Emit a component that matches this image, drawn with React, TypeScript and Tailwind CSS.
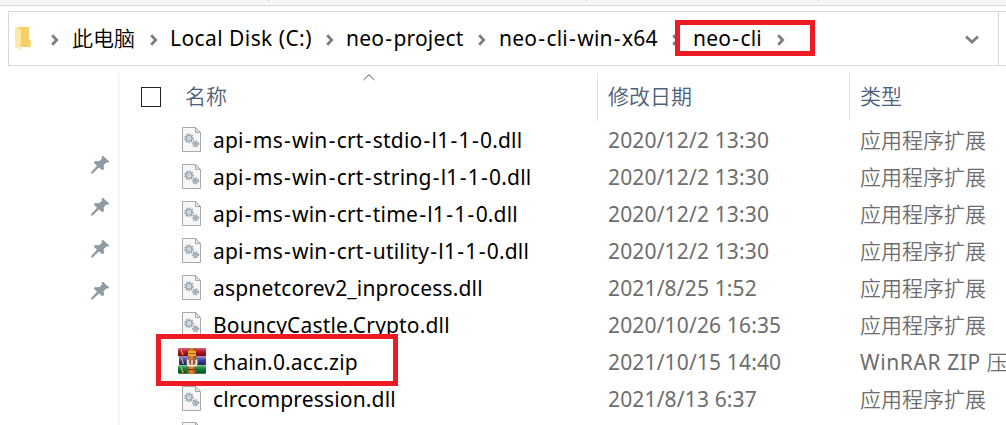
import React from "react";

type FileRow = {
  name: string;
  date: string;
  kind: string;
  icon: "dll" | "zip";
};

const files: FileRow[] = [
  { name: "api-ms-win-crt-stdio-l1-1-0.dll", date: "2020/12/2 13:30", kind: "应用程序扩展", icon: "dll" },
  { name: "api-ms-win-crt-string-l1-1-0.dll", date: "2020/12/2 13:30", kind: "应用程序扩展", icon: "dll" },
  { name: "api-ms-win-crt-time-l1-1-0.dll", date: "2020/12/2 13:30", kind: "应用程序扩展", icon: "dll" },
  { name: "api-ms-win-crt-utility-l1-1-0.dll", date: "2020/12/2 13:30", kind: "应用程序扩展", icon: "dll" },
  { name: "aspnetcorev2_inprocess.dll", date: "2021/8/25 1:52", kind: "应用程序扩展", icon: "dll" },
  { name: "BouncyCastle.Crypto.dll", date: "2020/10/26 16:35", kind: "应用程序扩展", icon: "dll" },
  { name: "chain.0.acc.zip", date: "2021/10/15 14:40", kind: "WinRAR ZIP 压", icon: "zip" },
  { name: "clrcompression.dll", date: "2021/8/13 6:37", kind: "应用程序扩展", icon: "dll" },
];

// Gives hyphens a little more room than the font does.
function Hyphenated({ text }: { text: string }) {
  return (
    <>
      {text.split("-").map((part, i) => (
        <React.Fragment key={i}>
          {i > 0 && <span className="px-[1.15px]">-</span>}
          {part}
        </React.Fragment>
      ))}
    </>
  );
}

function Chevron() {
  return (
    <svg width="8" height="12" viewBox="0 0 8 12" className="mt-0.5 shrink-0" fill="none" stroke="#7f7f7f" strokeWidth="2.8">
      <path d="M1.2 1.3 5.7 6 1.2 10.7" />
    </svg>
  );
}

function FolderIcon() {
  return (
    <svg width="16" height="24" viewBox="0 0 16 24" className="shrink-0">
      <path d="M3 0h11v12.5l2 1.5v6H3z" fill="#f5cf68" />
      <path d="M0 0h2l3.8 3v20.5L0 19.5z" fill="#ffe9a6" />
      <path d="M14 14l2 1v5h-2z" fill="#f8d778" />
    </svg>
  );
}

function Gear({ cx, cy, r }: { cx: number; cy: number; r: number }) {
  return (
    <g fill="none" stroke="#98a5af">
      <circle cx={cx} cy={cy} r={r} strokeWidth="1.5" strokeDasharray="1.5 1.2" />
      <circle cx={cx} cy={cy} r={r - 1.2} strokeWidth="1.3" fill="#dce3e8" />
      <circle cx={cx} cy={cy} r="0.7" fill="#98a5af" stroke="none" />
    </g>
  );
}

function DllIcon() {
  return (
    <svg width="19" height="25" viewBox="0 0 19 25" className="shrink-0">
      <path d="M.5.5h13l5 5v19H.5z" fill="#f7f7f7" stroke="#a8a8a8" />
      <path d="M13.5.5v5h5z" fill="#e4e4e4" stroke="#a0a0a0" strokeWidth=".9" />
      <Gear cx={7} cy={11.3} r={4.1} />
      <Gear cx={13.5} cy={16.8} r={2.9} />
    </svg>
  );
}

function ZipIcon() {
  return (
    <svg width="28" height="26" viewBox="0 0 28 26" className="shrink-0">
      <defs>
        <linearGradient id="red" x2="0" y2="1"><stop stopColor="#df6670" /><stop offset=".45" stopColor="#b3152c" /><stop offset="1" stopColor="#6f0714" /></linearGradient>
        <linearGradient id="blue" x2="0" y2="1"><stop stopColor="#8a8fd8" /><stop offset=".45" stopColor="#3d3f9c" /><stop offset="1" stopColor="#20215c" /></linearGradient>
        <linearGradient id="green" x2="0" y2="1"><stop stopColor="#5dbb78" /><stop offset=".45" stopColor="#157a38" /><stop offset="1" stopColor="#084a1c" /></linearGradient>
        <linearGradient id="belt"><stop stopColor="#a8551c" /><stop offset=".5" stopColor="#e08a38" /><stop offset="1" stopColor="#96420f" /></linearGradient>
      </defs>
      <rect x="0" y="0" width="28" height="8.5" rx="1" fill="url(#red)" />
      <rect x="1" y="8.7" width="27" height="8.4" rx="1" fill="url(#blue)" />
      <rect x="0" y="17.3" width="28" height="8.5" rx="1" fill="url(#green)" />
      <path d="M3 1.5 5 7M3.5 10 5.5 16M3 18.5 5 25" stroke="#d9a94b" strokeWidth="1.2" />
      <path d="M10 1.5 12 0h4l2 1.5V26H9.5V18h1z" fill="url(#belt)" />
      <path d="M10 3h8v5h-8z" fill="#efa92f" />
      <path d="M10.5 5.5h7" stroke="#9c5114" strokeWidth="1" />
      <path d="M9.8 11.5v4.3q0 2 2 2h4.6q2 0 2-2V11.5" fill="none" stroke="#f1eee9" strokeWidth="2" />
      <path d="M12.5 11h3v5h-3z" fill="#7f3912" />
      <path d="M14 11.5v4.5" stroke="#fff" strokeWidth="1.4" />
      <path d="M10 21.5h8" stroke="#7a3510" strokeWidth="1" />
    </svg>
  );
}

function PinIcon() {
  return (
    <svg width="19" height="19" viewBox="0 0 19 19" fill="#8f9ba3">
      <path d="M11.8.8 18.2 6.6 17.5 7.6 15.3 7.4 12.7 10.2 13 14 11.6 15.2 7.9 12.4 1.6 18.4.2 18.4.2 16.9 6 10.7 2.9 7.7 4 6 8.2 6.2 11 3.4 10.6 1.5z" />
    </svg>
  );
}

function AddressBar() {
  return (
    <div className="flex h-[55px] pl-2 text-[21px] leading-[53px] tracking-[0.2px] whitespace-nowrap text-black">
      <div className="flex w-[991px] shrink-0 items-center border border-[#d9d9d9] pl-1.5">
        <FolderIcon />
        <span className="ml-5 w-[21px]"><Chevron /></span>
        <span className="w-[78px] font-[350] tracking-normal">此电脑</span>
        <span className="w-[20px]"><Chevron /></span>
        <span className="w-[156px] tracking-[0.43px]">Local Disk (C:)</span>
        <span className="w-[20px]"><Chevron /></span>
        <span className="w-[132px]"><Hyphenated text="neo-project" /></span>
        <span className="w-[21px]"><Chevron /></span>
        <span className="w-[173px]"><Hyphenated text="neo-cli-win-x64" /></span>
        <span className="w-[21px]"><Chevron /></span>
        <span className="w-[84px]"><Hyphenated text="neo-cli" /></span>
        <Chevron />
        <svg width="14" height="9" viewBox="0 0 14 9" className="mt-0.5 mr-[19px] ml-auto" fill="none" stroke="#7f7f7f" strokeWidth="2.8">
          <path d="M1 1.5 7 7 13 1.5" />
        </svg>
      </div>
      <div className="grow border-y border-[#d9d9d9]" />
    </div>
  );
}

function ListHeader() {
  return (
    <div className="relative flex h-12 text-[21px] leading-[46px] font-[350] text-[#4c607a]">
      <div className="flex w-[478px] shrink-0 items-center border-r border-[#e2e2e2] pl-[21px]">
        <span className="h-5 w-5 border border-[#222]" />
        <span className="ml-6 pb-0.5">名称</span>
      </div>
      <div className="w-[252px] shrink-0 border-r border-[#e2e2e2] pl-[10px]">修改日期</div>
      <div className="pl-[10px]">类型</div>
      <svg width="12" height="7" viewBox="0 0 12 7" className="absolute top-[1px] left-[243px]" fill="none" stroke="#555" strokeWidth="1">
        <path d="M.5 6 6 .7 11.5 6" />
      </svg>
    </div>
  );
}

function Row({ file }: { file: FileRow }) {
  return (
    <div className="flex h-[37px] shrink-0 items-center text-[21px] leading-[35px] whitespace-nowrap">
      <span className="flex w-[93px] shrink-0 items-center justify-end pr-[7px]">
        {file.icon === "dll" ? <span className="flex pr-[5px]"><DllIcon /></span> : <span className="flex pb-0.5"><ZipIcon /></span>}
      </span>
      <span className="w-[395px] shrink-0 pt-0.5 tracking-[0.17px] text-black"><Hyphenated text={file.name} /></span>
      <span className="w-[252px] shrink-0 pt-0.5 tracking-[0.15px] text-[#6d6d6d]">{file.date}</span>
      {file.icon === "dll" ? (
        <span className="shrink-0 pt-0.5 font-[350] text-[#6d6d6d]">{file.kind}</span>
      ) : (
        <span className="shrink-0 pt-0.5 tracking-[0.6px] text-[#6d6d6d]">
          WinRAR ZIP <span className="font-[350]">压</span>
        </span>
      )}
    </div>
  );
}

export default function App() {
  return (
    <div className="relative flex h-[425px] w-[1006px] flex-col overflow-hidden bg-white font-['Noto_Sans','Noto_Sans_CJK_SC',sans-serif]">
      <div className="flex h-1.5 shrink-0 border-b border-[#d9d9d9] bg-[#f5f6f7]">
        <span className="h-0.5 w-[269px] border-r border-[#dadbdc]" />
        <span className="h-0.5 w-[318px] border-r border-[#dadbdc]" />
        <span className="h-0.5 w-[232px] border-r border-[#dadbdc]" />
      </div>
      <div className="mt-[5px] shrink-0"><AddressBar /></div>
      <div className="mt-[7px] flex grow">
        <aside className="flex w-[120px] shrink-0 flex-col items-end gap-[23px] border-r-2 border-[#f6f6f6] pt-[82px] pr-[8px]">
          <PinIcon />
          <PinIcon />
          <PinIcon />
          <PinIcon />
        </aside>
        <main className="flex w-[886px] shrink-0 flex-col overflow-hidden">
          <ListHeader />
          {files.map((file) => <Row key={file.name} file={file} />)}
          <div className="h-2 overflow-hidden pt-[5px] pl-[62px]"><DllIcon /></div>
        </main>
      </div>
      <div className="absolute top-5 left-[675px] h-9 w-[140px] border-[5px] border-[#ed1c24]" />
      <div className="absolute top-[334px] left-[156px] h-[52px] w-[242px] border-[5px] border-[#ed1c24]" />
    </div>
  );
}
